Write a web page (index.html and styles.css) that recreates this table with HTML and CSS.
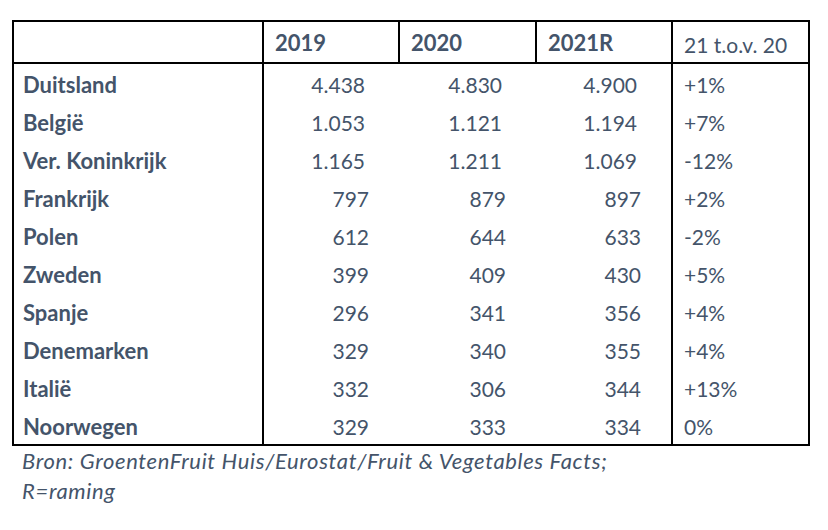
FILE: index.html
```html
<!DOCTYPE html>
<html lang="nl">
<head>
<meta charset="utf-8">
<title>Export</title>
<link rel="stylesheet" href="styles.css">
</head>
<body>
<div class="wrap">
  <table class="data">
    <colgroup>
      <col class="c-land">
      <col class="c-num">
      <col class="c-num2">
      <col class="c-num">
      <col class="c-pct">
    </colgroup>
    <thead>
      <tr>
        <th class="land"></th>
        <th class="year">2019</th>
        <th class="year">2020</th>
        <th class="year">2021R</th>
        <th class="cmp">21 t.o.v. 20</th>
      </tr>
    </thead>
    <tbody>
      <tr><td class="land">Duitsland</td><td class="num k">4.438</td><td class="num k">4.830</td><td class="num k">4.900</td><td class="pct">+1%</td></tr>
      <tr><td class="land">België</td><td class="num k">1.053</td><td class="num k">1.121</td><td class="num k">1.194</td><td class="pct">+7%</td></tr>
      <tr><td class="land">Ver. Koninkrijk</td><td class="num k">1.165</td><td class="num k">1.211</td><td class="num k">1.069</td><td class="pct">-12%</td></tr>
      <tr><td class="land">Frankrijk</td><td class="num">797</td><td class="num">879</td><td class="num">897</td><td class="pct">+2%</td></tr>
      <tr><td class="land">Polen</td><td class="num">612</td><td class="num">644</td><td class="num">633</td><td class="pct">-2%</td></tr>
      <tr><td class="land">Zweden</td><td class="num">399</td><td class="num">409</td><td class="num">430</td><td class="pct">+5%</td></tr>
      <tr><td class="land">Spanje</td><td class="num">296</td><td class="num">341</td><td class="num">356</td><td class="pct">+4%</td></tr>
      <tr><td class="land">Denemarken</td><td class="num">329</td><td class="num">340</td><td class="num">355</td><td class="pct">+4%</td></tr>
      <tr><td class="land">Italië</td><td class="num">332</td><td class="num">306</td><td class="num">344</td><td class="pct">+13%</td></tr>
      <tr><td class="land">Noorwegen</td><td class="num">329</td><td class="num">333</td><td class="num">334</td><td class="pct">0%</td></tr>
    </tbody>
  </table>
  <p class="source">Bron: GroentenFruit Huis/Eurostat/Fruit &amp; Vegetables Facts;<br>R=raming</p>
</div>
</body>
</html>
```

FILE: styles.css
```css
html, body {
  margin: 0;
  padding: 0;
  background: #ffffff;
}

body {
  font-family: Lato, "Open Sans", "Liberation Sans", sans-serif;
  color: #44546a;
}

.wrap {
  padding: 20px 0 0 12px;
}

.data {
  border-collapse: collapse;
  table-layout: fixed;
  width: 796px;
  border: 2px solid #000;
  font-size: 21px;
}

.c-land { width: 250px; }
.c-num { width: 136px; }
.c-num2 { width: 137px; }
.c-pct { width: 137px; }

.data th,
.data td {
  padding: 0;
  white-space: nowrap;
  line-height: 24px;
}

.data thead th {
  border: 2px solid #000;
  text-align: left;
  vertical-align: middle;
}

.data th.year {
  font-weight: 700;
  font-size: 22px;
  height: 38px;
  padding-left: 11px;
  padding-top: 2px;
}

.data th.cmp {
  font-weight: 400;
  height: 34px;
  padding-left: 11px;
  padding-top: 6px;
}

.data tbody td {
  height: 34px;
  padding-top: 4px;
  vertical-align: middle;
}

.data td.land {
  font-weight: 700;
  font-size: 22px;
  padding-left: 9px;
  border-right: 2px solid #000;
}

.data td.num {
  text-align: right;
  padding-right: 30px;
}

.data td.num.k {
  padding-right: 34px;
}

.data td.pct {
  padding-left: 11px;
  border-left: 2px solid #000;
}

.source {
  margin: 0 0 0 10px;
  font-style: italic;
  font-size: 22px;
  letter-spacing: 0.65px;
  line-height: 30px;
}
```
